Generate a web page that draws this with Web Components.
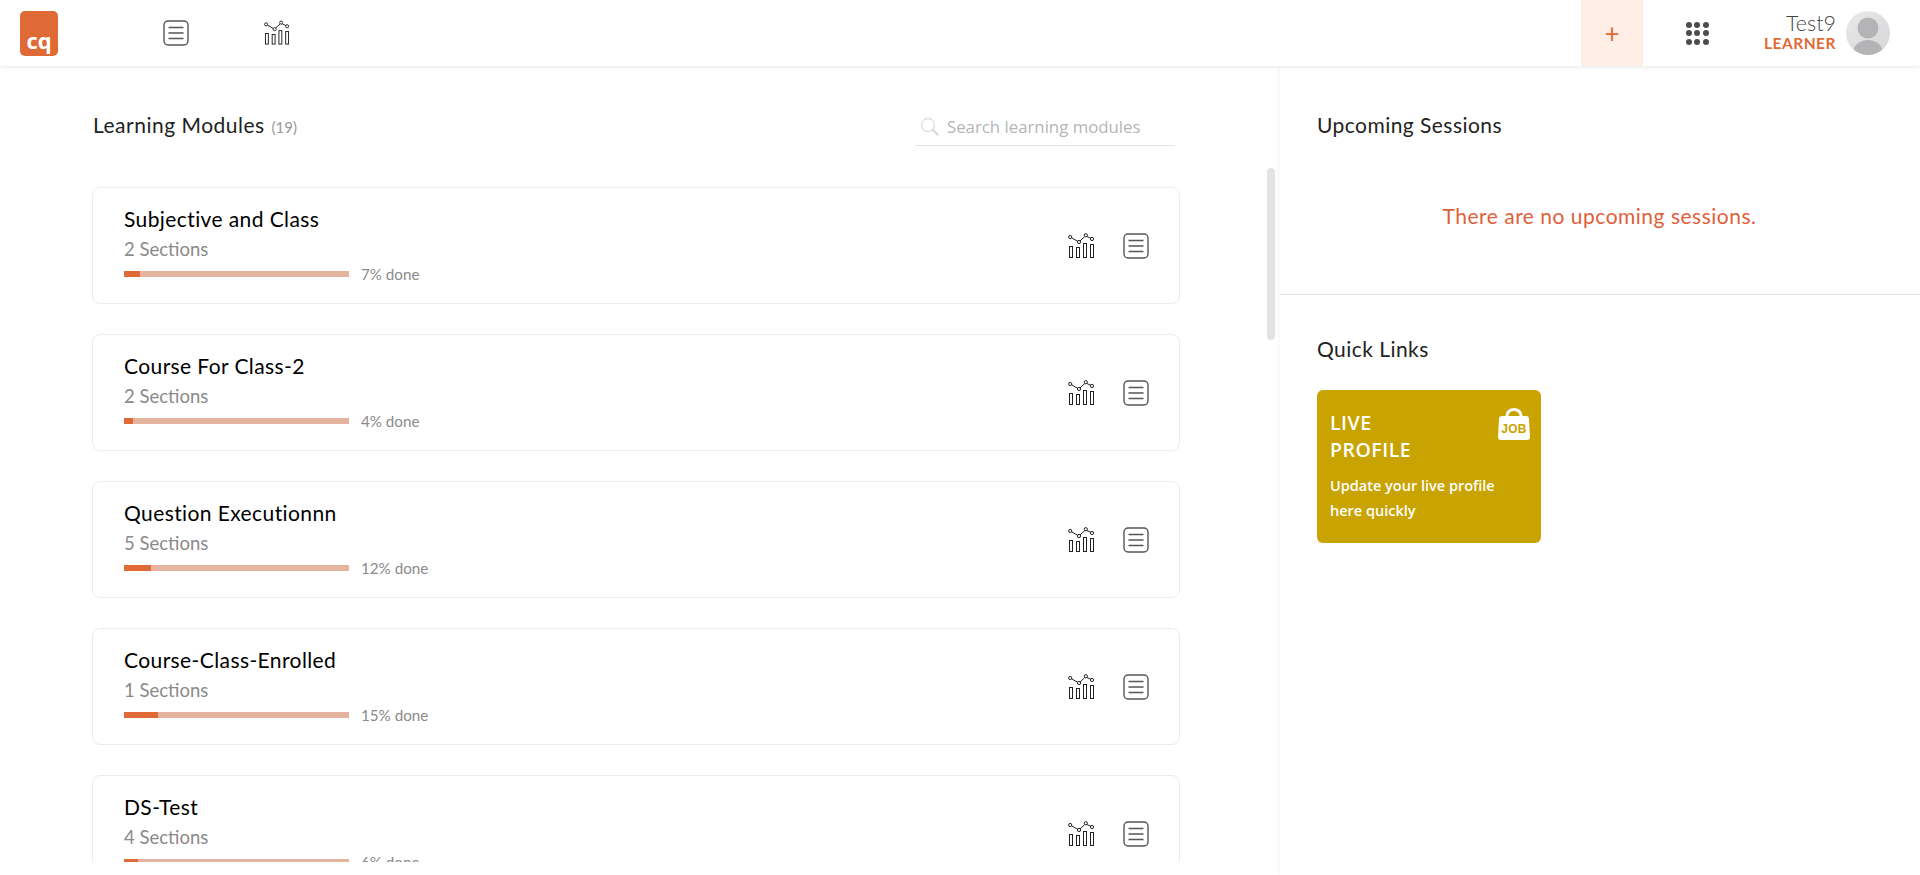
<!DOCTYPE html>
<html lang="en">
<head>
<meta charset="utf-8">
<title>Learning Modules</title>
<style>
  html, body { margin: 0; height: 875px; overflow: hidden; background: #fff; }
  body { font-family: Lato, "Open Sans", sans-serif; color: #222; }
  #page { display: flex; flex-direction: column; height: 875px; }
  #content { display: flex; flex: 1; min-height: 0; }
</style>
</head>
<body>
<div id="page">
  <app-header></app-header>
  <div id="content">
    <module-panel></module-panel>
    <side-panel></side-panel>
  </div>
</div>

<script>
// Shared inline icons, used by the header and by the module rows.
const LIST_ICON = `
  <svg width="26" height="26" viewBox="0 0 26 26" fill="none" stroke="#555" aria-hidden="true">
    <rect x="1" y="1" width="24" height="24" rx="4" stroke-width="1.4"/>
    <path d="M5.500 7.500h15M5.500 13h15M5.500 18.500h15" stroke-width="1.3"/>
  </svg>`;

const CHART_ICON = `
  <svg width="27" height="26" viewBox="0 0 27 26" fill="none" stroke="#222" stroke-width="1" aria-hidden="true">
    <path d="M3.300 4.600 10 8.500M12 8 16.800 3.500M18.900 3.500 23 5.400"/>
    <g fill="#fff">
      <circle cx="2.200" cy="4" r="1.600"/>
      <circle cx="11" cy="9" r="1.600"/>
      <circle cx="17.800" cy="2.200" r="1.600"/>
      <circle cx="24" cy="6" r="1.600"/>
    </g>
    <rect x="1.500" y="13.500" width="3" height="11"/>
    <rect x="8.500" y="14.500" width="3" height="10"/>
    <rect x="15.500" y="10.500" width="3" height="14"/>
    <rect x="22.500" y="11.500" width="3" height="13"/>
  </svg>`;

/** Top navigation bar. */
class AppHeader extends HTMLElement {
  constructor() {
    super();
    this.attachShadow({ mode: "open" });
    this.shadowRoot.innerHTML = `
      <style>
        :host { display: flex; align-items: center; height: 66px; flex: none; position: relative; z-index: 2;
                background: #fff; box-shadow: 0 1px 4px rgba(0,0,0,.1); }
        .logo { width: 38px; height: 45px; margin-left: 20px; background: #e06a35; border-radius: 5px; color: #fff;
                display: flex; align-items: flex-end; justify-content: center; box-sizing: border-box; padding-bottom: 3px;
                font: 700 22px/25px "Open Sans", sans-serif; }
        .nav { display: flex; margin-left: 105px; gap: 75px; }
        .nav span { display: flex; width: 26px; height: 26px; }
        .spacer { flex: 1; }
        .plus { width: 62px; height: 66px; background: #ffeee6; color: #e06a35; display: flex; align-items: center;
                justify-content: center; font: 400 26px/1 Lato, sans-serif; }
        .apps { display: grid; grid-template-columns: repeat(3, 6px); gap: 2.500px; margin: 0 55px 0 43px; }
        .apps i { width: 6px; height: 6px; border-radius: 50%; background: #4c4c4c; }
        .user { text-align: right; margin-right: 10px; margin-top: -3px; }
        .name { font: 300 21.500px/24px Lato, sans-serif; color: #444; }
        .role { font: 700 15.500px/17px Lato, sans-serif; color: #e06a35; letter-spacing: .5px; }
        .avatar { margin-right: 30px; display: flex; }
      </style>
      <div class="logo">cq</div>
      <div class="nav">
        <span>${LIST_ICON}</span>
        <span>${CHART_ICON}</span>
      </div>
      <div class="spacer"></div>
      <div class="plus">+</div>
      <div class="apps">${"<i></i>".repeat(9)}</div>
      <div class="user">
        <div class="name">Test9</div>
        <div class="role">LEARNER</div>
      </div>
      <div class="avatar">
        <svg width="44" height="44" viewBox="0 0 44 44" aria-hidden="true">
          <defs>
            <linearGradient id="bg" x1="0" y1="0" x2="1" y2="1">
              <stop offset="0" stop-color="#e9e9ea"/><stop offset="1" stop-color="#d6d6d8"/>
            </linearGradient>
            <clipPath id="round"><circle cx="22" cy="22" r="22"/></clipPath>
          </defs>
          <circle cx="22" cy="22" r="22" fill="url(#bg)"/>
          <g clip-path="url(#round)" fill="#b4b4b7">
            <circle cx="22" cy="17" r="10.500"/>
            <ellipse cx="22" cy="42" rx="15" ry="13"/>
          </g>
        </svg>
      </div>
    `;
  }
}

/** One row of the learning module list. */
class ModuleCard extends HTMLElement {
  static get observedAttributes() {
    return ["name", "sections", "done"];
  }

  constructor() {
    super();
    this.attachShadow({ mode: "open" });
  }

  connectedCallback() {
    this.render();
  }

  attributeChangedCallback(name, oldValue, newValue) {
    if (oldValue !== newValue) {
      this.render();
    }
  }

  render() {
    const name = this.getAttribute("name");
    const sections = this.getAttribute("sections");
    const done = this.getAttribute("done");

    this.shadowRoot.innerHTML = `
      <style>
        :host { display: flex; align-items: center; box-sizing: border-box; width: 1088px; height: 117px; flex: none;
                border: 1px solid #ececec; border-radius: 8px; background: #fff; padding: 0 30px 0 31px; }
        .info { flex: 1; margin-bottom: 1px; }
        .title { font: 400 21px/24px Lato, sans-serif; color: #000; letter-spacing: .4px; }
        .count { font: 400 18.500px/24px Lato, sans-serif; color: #8a8a8a; margin-top: 6px; }
        .progress { display: flex; align-items: center; gap: 12px; height: 18px; margin-top: 4px; }
        .bar { width: 225px; height: 6px; background: #e4b49e; }
        .fill { height: 100%; background: #e06a35; }
        .pct { font: 400 15.200px/18px Lato, sans-serif; color: #8a8a8a; }
        .actions { display: flex; gap: 28px; }
        .actions span { display: flex; }
      </style>
      <div class="info">
        <div class="title">${name}</div>
        <div class="count">${sections} Sections</div>
        <div class="progress">
          <div class="bar"><div class="fill" style="width:${done}%"></div></div>
          <div class="pct">${done}% done</div>
        </div>
      </div>
      <div class="actions">
        <span>${CHART_ICON}</span>
        <span>${LIST_ICON}</span>
      </div>
    `;
  }
}

/** Left column: heading, search field and the scrolling module list. */
class ModulePanel extends HTMLElement {
  constructor() {
    super();
    this.attachShadow({ mode: "open" });
    const modules = [
      ["Subjective and Class", 2, 7],
      ["Course For Class-2", 2, 4],
      ["Question Executionnn", 5, 12],
      ["Course-Class-Enrolled", 1, 15],
      ["DS-Test", 4, 6],
    ];
    this.shadowRoot.innerHTML = `
      <style>
        :host { display: flex; flex-direction: column; width: 1280px; flex: none; box-sizing: border-box; }
        .top { display: flex; align-items: flex-end; justify-content: space-between; height: 102px; flex: none;
               box-sizing: border-box; padding: 0 105px 22px 93px; }
        h2 { margin: 0 0 5px; font: 400 21px/28px Lato, sans-serif; color: #222; letter-spacing: .5px; }
        h2 small { font-size: 15px; color: #999; letter-spacing: 0; margin-left: 1px; }
        .search { display: flex; align-items: center; gap: 8px; width: 260px; height: 36px; box-sizing: border-box;
                  padding: 0 5px 2px; border-bottom: 1px solid #e3e3e3; color: #b5b5b5; font: 400 16.800px/24px "Open Sans", sans-serif; }
        .scroll { position: relative; flex: 1; min-height: 0; margin-bottom: 13px; }
        .list { height: 100%; overflow: hidden; box-sizing: border-box;
                display: flex; flex-direction: column; gap: 30px; padding: 19px 0 0 92px; }
        /* the list's scrollbar thumb, lying over the panel's right edge */
        .thumb { position: absolute; top: 0; right: 5px; width: 8px; height: 172px; background: #e3e3e3; border-radius: 4px; }
      </style>
      <div class="top">
        <h2>Learning Modules <small>(19)</small></h2>
        <div class="search">
          <svg width="19" height="19" viewBox="0 0 19 19" fill="none" stroke="#ddd" stroke-width="1.3" aria-hidden="true">
            <circle cx="8" cy="8" r="6.500"/><path d="m12.800 12.800 5.400 5.400" stroke="#ccc" stroke-width="1.600"/>
          </svg>
          <span>Search learning modules</span>
        </div>
      </div>
      <div class="scroll">
        <div class="list"></div>
        <div class="thumb"></div>
      </div>
    `;
    const list = this.shadowRoot.querySelector(".list");
    modules.forEach(([name, sections, done]) => {
      const card = document.createElement("module-card");
      card.setAttribute("name", name);
      card.setAttribute("sections", sections);
      card.setAttribute("done", done);
      list.appendChild(card);
    });
  }
}

/** Right column: upcoming sessions and quick links. */
class SidePanel extends HTMLElement {
  constructor() {
    super();
    this.attachShadow({ mode: "open" });
    this.shadowRoot.innerHTML = `
      <style>
        :host { display: flex; flex-direction: column; flex: 1; box-shadow: -2px 0 4px rgba(0,0,0,.035); }
        section { padding: 44px 38px 0 37px; }
        h3 { margin: 0; font: 400 21px/28px Lato, sans-serif; color: #222; letter-spacing: .45px; }
        .sessions { height: 229px; flex: none; box-sizing: border-box; border-bottom: 1px solid #e3e3e3; padding-top: 45px; }
        .empty { margin-top: 63px; text-align: center; font: 400 21px/28px Lato, sans-serif; color: #e0603a; letter-spacing: .5px; }
        .links { padding-top: 40px; }
        quick-link { margin-top: 27px; }
      </style>
      <section class="sessions">
        <h3>Upcoming Sessions</h3>
        <div class="empty">There are no upcoming sessions.</div>
      </section>
      <section class="links">
        <h3>Quick Links</h3>
        <quick-link title-line="LIVE" title-rest="PROFILE">Update your live profile here quickly</quick-link>
      </section>
    `;
  }
}

/** Coloured shortcut tile. */
class QuickLink extends HTMLElement {
  constructor() {
    super();
    this.attachShadow({ mode: "open" });
  }

  connectedCallback() {
    this.shadowRoot.innerHTML = `
      <style>
        :host { display: block; position: relative; width: 224px; height: 153px; box-sizing: border-box;
                padding: 19px 13px; background: #c9a300; border-radius: 6px; color: #fff; }
        .title { font: 600 19.500px/27px "Open Sans", sans-serif; letter-spacing: .5px; }
        .desc { width: 175px; margin-top: 10px; font: 600 14.500px/25px "Open Sans", sans-serif; }
        svg { position: absolute; top: 18px; right: 11px; }
        text { font: 700 12px "Liberation Sans", sans-serif; fill: #c9a300; letter-spacing: .3px; }
      </style>
      <div class="title">${this.getAttribute("title-line")}<br>${this.getAttribute("title-rest")}</div>
      <div class="desc"><slot></slot></div>
      <svg width="32" height="32" viewBox="0 0 32 32" aria-hidden="true">
        <path d="M9 9V7.500a7 6 0 0 1 14 0V9" fill="none" stroke="#fff" stroke-width="3"/>
        <path d="M4 8h24a3 3 0 0 1 3 3l1 18a3 3 0 0 1-3 3H3a3 3 0 0 1-3-3l1-18a3 3 0 0 1 3-3z" fill="#fff"/>
        <text x="16" y="25" text-anchor="middle">JOB</text>
      </svg>
    `;
  }
}

customElements.define("app-header", AppHeader);
customElements.define("module-card", ModuleCard);
customElements.define("module-panel", ModulePanel);
customElements.define("quick-link", QuickLink);
customElements.define("side-panel", SidePanel);
</script>
</body>
</html>
